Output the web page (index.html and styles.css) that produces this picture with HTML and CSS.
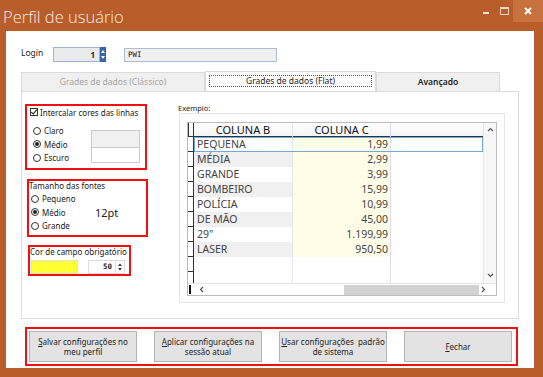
FILE: index.html
```html
<!DOCTYPE html>
<html lang="pt-BR">
  <head>
    <meta charset="UTF-8" />
    <meta name="viewport" content="width=device-width, initial-scale=1.0" />
    <title>Perfil de usuário</title>
    <link rel="stylesheet" href="styles.css">
  </head>
  <body>
    <div class="window">
      <div class="titlebar">
        <span class="title">Perfil de usuário</span>
        <div class="controls">
          <span class="ctl ctl-min"><i></i></span>
          <span class="ctl ctl-max"><i></i></span>
          <span class="ctl ctl-close">
            <svg width="8" height="8" viewBox="0 0 8 8"><path d="M1 1L7 7M7 1L1 7" stroke="#fff" stroke-width="1.8" /></svg>
          </span>
        </div>
      </div>

      <div class="client">
        <div class="login-row">
          <span class="login-label">Login</span>
          <div class="login-id">1</div>
          <div class="login-spin">
            <svg width="6" height="15" viewBox="0 0 6 15"><path d="M1 6L3 3L5 6Z M1 9L3 12L5 9Z" fill="#fff" /></svg>
          </div>
          <div class="login-name">PWI</div>
        </div>

        <div class="tabs">
          <div class="tab tab-disabled">Grades de dados (Clássico)</div>
          <div class="tab tab-active"><span>Grades de dados (Flat)</span></div>
          <div class="tab tab-last">Avançado</div>
        </div>

        <div class="tab-page">
          <div class="options">
            <div class="box box-rows">
              <div class="check-row">
                <span class="checkbox">
                  <svg width="8" height="8" viewBox="0 0 8 8"><path d="M1.3 4.2L3.2 6L6.8 1.6" stroke="#222" stroke-width="1.1" fill="none" /></svg>
                </span>
                <span>Intercalar cores das linhas</span>
              </div>
              <div class="shade-row">
                <div class="radios">
                  <div class="radio-row"><span class="radio"></span>Claro</div>
                  <div class="radio-row"><span class="radio checked"></span>Médio</div>
                  <div class="radio-row"><span class="radio"></span>Escuro</div>
                </div>
                <div class="swatches">
                  <div class="swatch swatch-light"></div>
                  <div class="swatch"></div>
                </div>
              </div>
            </div>

            <div class="box box-font">
              <div class="caption">Tamanho das fontes</div>
              <div class="font-row">
                <div class="radios">
                  <div class="radio-row"><span class="radio"></span>Pequeno</div>
                  <div class="radio-row"><span class="radio checked"></span>Médio</div>
                  <div class="radio-row"><span class="radio"></span>Grande</div>
                </div>
                <span class="font-size">12pt</span>
              </div>
            </div>

            <div class="box box-required">
              <div class="caption">Cor de campo obrigatório</div>
              <div class="required-row">
                <div class="yellow"></div>
                <div class="num">50</div>
                <div class="num-spin">
                  <svg width="8" height="12" viewBox="0 0 8 12"><path d="M2 5L4 2.5L6 5Z M2 7L4 9.5L6 7Z" fill="#333" /></svg>
                </div>
              </div>
            </div>
          </div>

          <div class="example">
            <div class="example-label">Exemplo:</div>
            <div class="example-frame">
              <div class="grid">
                <div class="grid-area">
                  <div class="cells">
                    <div class="row head">
                      <div class="ind"></div>
                      <div class="cb">COLUNA B</div>
                      <div class="cc">COLUNA C</div>
                      <div class="fill"></div>
                    </div>
                    <div class="row selected">
                      <div class="ind"></div>
                      <div class="cb">PEQUENA</div>
                      <div class="cc">1,99</div>
                      <div class="fill"></div>
                      <div class="sel-frame"></div>
                    </div>
                    <div class="row alt">
                      <div class="ind"></div>
                      <div class="cb">MÉDIA</div>
                      <div class="cc">2,99</div>
                      <div class="fill"></div>
                    </div>
                    <div class="row">
                      <div class="ind"></div>
                      <div class="cb">GRANDE</div>
                      <div class="cc">3,99</div>
                      <div class="fill"></div>
                    </div>
                    <div class="row alt">
                      <div class="ind"></div>
                      <div class="cb">BOMBEIRO</div>
                      <div class="cc">15,99</div>
                      <div class="fill"></div>
                    </div>
                    <div class="row">
                      <div class="ind"></div>
                      <div class="cb">POLÍCIA</div>
                      <div class="cc">10,99</div>
                      <div class="fill"></div>
                    </div>
                    <div class="row alt">
                      <div class="ind"></div>
                      <div class="cb">DE MÃO</div>
                      <div class="cc">45,00</div>
                      <div class="fill"></div>
                    </div>
                    <div class="row">
                      <div class="ind"></div>
                      <div class="cb">29"</div>
                      <div class="cc">1.199,99</div>
                      <div class="fill"></div>
                    </div>
                    <div class="row alt">
                      <div class="ind"></div>
                      <div class="cb">LASER</div>
                      <div class="cc">950,50</div>
                      <div class="fill"></div>
                    </div>
                    <div class="row empty">
                      <div class="ind"></div>
                      <div class="cb"></div>
                      <div class="cc"></div>
                      <div class="fill"></div>
                    </div>
                    <div class="row empty">
                      <div class="ind"></div>
                      <div class="cb"></div>
                      <div class="cc"></div>
                      <div class="fill"></div>
                    </div>
                  </div>
                  <div class="vscroll">
                    <svg width="7" height="5" viewBox="0 0 7 5"><path d="M1 4L3.5 1.5L6 4" stroke="#555" stroke-width="1.2" fill="none" /></svg>
                    <svg width="7" height="5" viewBox="0 0 7 5"><path d="M1 1L3.5 3.5L6 1" stroke="#555" stroke-width="1.2" fill="none" /></svg>
                  </div>
                </div>
                <div class="hscroll">
                  <span class="hs-mark"></span>
                  <svg class="hs-left" width="5" height="7" viewBox="0 0 5 7"><path d="M4 1L1.5 3.5L4 6" stroke="#555" stroke-width="1.2" fill="none" /></svg>
                  <span class="hs-track"><span class="hs-thumb"></span></span>
                  <svg class="hs-right" width="5" height="7" viewBox="0 0 5 7"><path d="M1 1L3.5 3.5L1 6" stroke="#555" stroke-width="1.2" fill="none" /></svg>
                  <span class="hs-corner"></span>
                </div>
              </div>
            </div>
          </div>
        </div>

        <div class="actions">
          <button class="btn"><u>S</u>alvar configurações no<br>meu perfil</button>
          <button class="btn"><u>A</u>plicar configurações na<br>sessão atual</button>
          <button class="btn"><u>U</u>sar configurações&nbsp; padrão<br>de sistema</button>
          <button class="btn"><u>F</u>echar</button>
        </div>
      </div>
    </div>
  </body>
</html>
```

FILE: styles.css
```css
body {
  margin: 0;
  background: #b95d2b;
  font-family: "Noto Sans", sans-serif;
  font-size: 8px;
  color: #222;
}
.window {
  width: 543px;
  height: 377px;
  display: flex;
  flex-direction: column;
}
.titlebar {
  height: 31px;
  display: flex;
  justify-content: space-between;
}
.title {
  font-family: "Open Sans", sans-serif;
  font-weight: 300;
  font-size: 16.5px;
  color: #f7ece4;
  padding: 5px 0 0 3px;
}
.controls {
  display: flex;
  align-items: flex-start;
}
.ctl {
  width: 18px;
  height: 22px;
  display: flex;
  align-items: center;
  justify-content: center;
}
.ctl-min i {
  width: 6px;
  height: 2px;
  background: #f3e2d6;
  margin-top: 3px;
}
.ctl-max i {
  width: 7px;
  height: 5px;
  border: 1px solid #e8d2c3;
  border-top-width: 2px;
}
.ctl-close {
  width: 30px;
  background: #c8733f;
}
.client {
  background: #fff;
  margin: 0 9px 9px 6px;
  flex: 1;
}
.login-row {
  display: flex;
  align-items: flex-start;
  padding: 16px 0 0 15px;
  height: 15px;
}
.login-label {
  width: 32px;
  line-height: 12px;
  font-size: 8.5px;
}
.login-id {
  width: 47px;
  height: 15px;
  box-sizing: border-box;
  border: 1px solid #9fb3cc;
  background: #e9eaec;
  text-align: right;
  padding-right: 4px;
  font-weight: bold;
  line-height: 13px;
}
.login-spin {
  width: 6px;
  height: 15px;
  background: #3466a8;
}
.login-name {
  margin: 1px 0 0 18px;
  width: 153px;
  height: 14px;
  box-sizing: border-box;
  border: 1px solid #aebccd;
  background: #f0f0f0;
  padding-left: 3px;
  font-family: "DejaVu Sans Mono", monospace;
  font-size: 7.5px;
  line-height: 12px;
}
.tabs {
  display: flex;
  align-items: flex-end;
  margin: 9px 0 0 15px;
  width: 479px;
  height: 20px;
}
.tab {
  height: 19px;
  box-sizing: border-box;
  border: 1px solid #dadada;
  border-bottom: none;
  background: #f0f0f0;
  text-align: center;
  line-height: 18px;
  font-size: 8.5px;
}
.tab-disabled {
  width: 184px;
  color: #a4a4a4;
}
.tab-active {
  width: 171px;
  height: 20px;
  background: #fff;
  padding: 3px 3px 0;
}
.tab-active span {
  display: block;
  border: 1px dotted #555;
  line-height: 10px;
  height: 12px;
  box-sizing: border-box;
}
.tab-last {
  width: 124px;
  font-weight: 600;
}
.tab-page {
  margin-left: 15px;
  width: 498px;
  height: 228px;
  box-sizing: border-box;
  border: 1px solid #dcdcdc;
  display: flex;
  padding: 12px 0 0 3px;
}
.options {
  width: 123px;
  display: flex;
  flex-direction: column;
}
.box {
  border: 2px solid #f01010;
  box-sizing: border-box;
}
.box-rows {
  width: 122px;
  height: 66px;
  padding: 1px 0 0 3px;
}
.check-row {
  display: flex;
  align-items: center;
  height: 10px;
}
.checkbox {
  width: 8px;
  height: 8px;
  box-sizing: border-box;
  border: 1px solid #333;
  margin-right: 2px;
  display: flex;
}
.checkbox svg {
  margin: -1px;
}
.shade-row {
  display: flex;
  margin-top: 7px;
}
.radios {
  padding-left: 3px;
  width: 58px;
}
.radio-row {
  display: flex;
  align-items: center;
  height: 13.5px;
}
.radio {
  width: 8px;
  height: 8px;
  box-sizing: border-box;
  border: 1px solid #333;
  border-radius: 50%;
  margin-right: 3px;
  display: flex;
  align-items: center;
  justify-content: center;
}
.radio.checked::after {
  content: "";
  width: 4px;
  height: 4px;
  border-radius: 50%;
  background: #222;
}
.swatches {
  margin-top: 6px;
}
.swatch {
  width: 49px;
  height: 16px;
  box-sizing: border-box;
  border: 1px solid #cbcbcb;
}
.swatch-light {
  height: 17px;
  background: #f0f0f0;
  border-bottom: none;
}
.box-font {
  margin: 9px 0 0 2px;
  width: 121px;
  height: 58px;
  padding-top: 0;
}
.caption {
  line-height: 10px;
  height: 10px;
}
.font-row {
  display: flex;
  align-items: center;
  margin-top: 1px;
}
.box-font .radios {
  padding-left: 2px;
  width: 64px;
}
.font-size {
  font-size: 11px;
  color: #222;
}
.box-required {
  margin: 8px 0 0 3px;
  width: 103px;
  height: 31px;
  padding-left: 0;
}
.required-row {
  display: flex;
  margin: 3px 0 0 1px;
}
.yellow {
  width: 47px;
  height: 14px;
  background: #ffff33;
  border: 1px solid #e0e0e0;
  box-sizing: border-box;
}
.num {
  margin-left: 10px;
  width: 28px;
  height: 14px;
  box-sizing: border-box;
  border: 1px solid #dcdcdc;
  text-align: right;
  padding-right: 3px;
  font-family: "DejaVu Sans Mono", monospace;
  font-size: 7.5px;
  font-weight: bold;
  line-height: 12px;
}
.num-spin {
  width: 9px;
  height: 14px;
  box-sizing: border-box;
  border: 1px solid #dcdcdc;
  border-left: none;
  display: flex;
  align-items: center;
}
.example {
  margin-left: 29px;
}
.example-label {
  height: 9px;
  line-height: 8px;
  font-size: 7.5px;
  padding-left: 1px;
}
.example-frame {
  margin-left: 2px;
  width: 326px;
  height: 190px;
  box-sizing: border-box;
  border: 1px solid #e4e4e4;
  padding: 8px 0 0 7px;
}
.grid {
  width: 310px;
  height: 174px;
  box-sizing: border-box;
  border: 1px solid #bcbcbc;
  display: flex;
  flex-direction: column;
  font-size: 10.5px;
  color: #444;
}
.grid-area {
  display: flex;
  height: 161px;
  overflow: hidden;
}
.cells {
  width: 296px;
}
.row {
  display: grid;
  grid-template-columns: 6px 99px 98px 1fr;
  grid-template-rows: 1fr;
  height: 15px;
  line-height: 15px;
}
.row > div {
  box-sizing: border-box;
  grid-row: 1;
}
.row > .ind {
  grid-column: 1;
}
.row > .cb {
  grid-column: 2;
}
.row > .cc {
  grid-column: 3;
}
.row > .fill {
  grid-column: 4;
}
.ind {
  border-right: 1px solid #333;
  border-bottom: 1px solid #333;
}
.cb {
  padding-left: 3px;
  border-right: 1px solid #e6e6ef;
  white-space: nowrap;
}
.cc {
  text-align: right;
  padding-right: 2px;
  background: #fffde8;
  border-right: 1px solid #dcdcee;
}
.alt .cb {
  background: #f0f0f0;
}
.head {
  height: 14px;
  line-height: 14px;
  background: linear-gradient(#fff, #f4f4f4);
  border-bottom: 1px solid #333;
  box-sizing: border-box;
  color: #111;
  font-size: 11px;
}
.head .ind {
  border-left: 1px solid #333;
  border-bottom: none;
}
.head .cb,
.head .cc {
  text-align: center;
  padding: 0;
  background: none;
}
.head .cb {
  border-right: 1px solid #e8e8e8;
}
.empty .cc {
  background: #fff;
}
.row > .sel-frame {
  grid-column: 2 / 5;
  border: 1px solid #74a9dc;
}
.vscroll {
  width: 12px;
  background: #f7f7f7;
  border-left: 1px solid #e6e6e6;
  display: flex;
  flex-direction: column;
  align-items: center;
  justify-content: space-between;
  padding: 4px 0 5px;
}
.hscroll {
  height: 11px;
  display: flex;
  align-items: center;
  border-top: 1px solid #e4e4e4;
}
.hs-mark {
  width: 2px;
  height: 9px;
  background: #111;
  margin: 0 8px 0 1px;
}
.hs-track {
  width: 272px;
  height: 10px;
  margin-left: 3px;
  display: flex;
  justify-content: flex-end;
}
.hs-thumb {
  width: 135px;
  background: #d2d2d2;
}
.hs-right {
  margin-left: 2px;
}
.hs-corner {
  flex: 1;
}
.actions {
  margin: 8px 0 0 19px;
  width: 493px;
  height: 39px;
  box-sizing: border-box;
  border: 2px solid #f01010;
  display: flex;
  gap: 17px;
  padding: 2px 0 0 2px;
}
.btn {
  width: 108px;
  height: 31px;
  background: #e3e3e3;
  border: 1px solid #b4b4b4;
  font-family: "Noto Sans", sans-serif;
  font-size: 8px;
  line-height: 10px;
  color: #222;
  padding: 0;
}
```
